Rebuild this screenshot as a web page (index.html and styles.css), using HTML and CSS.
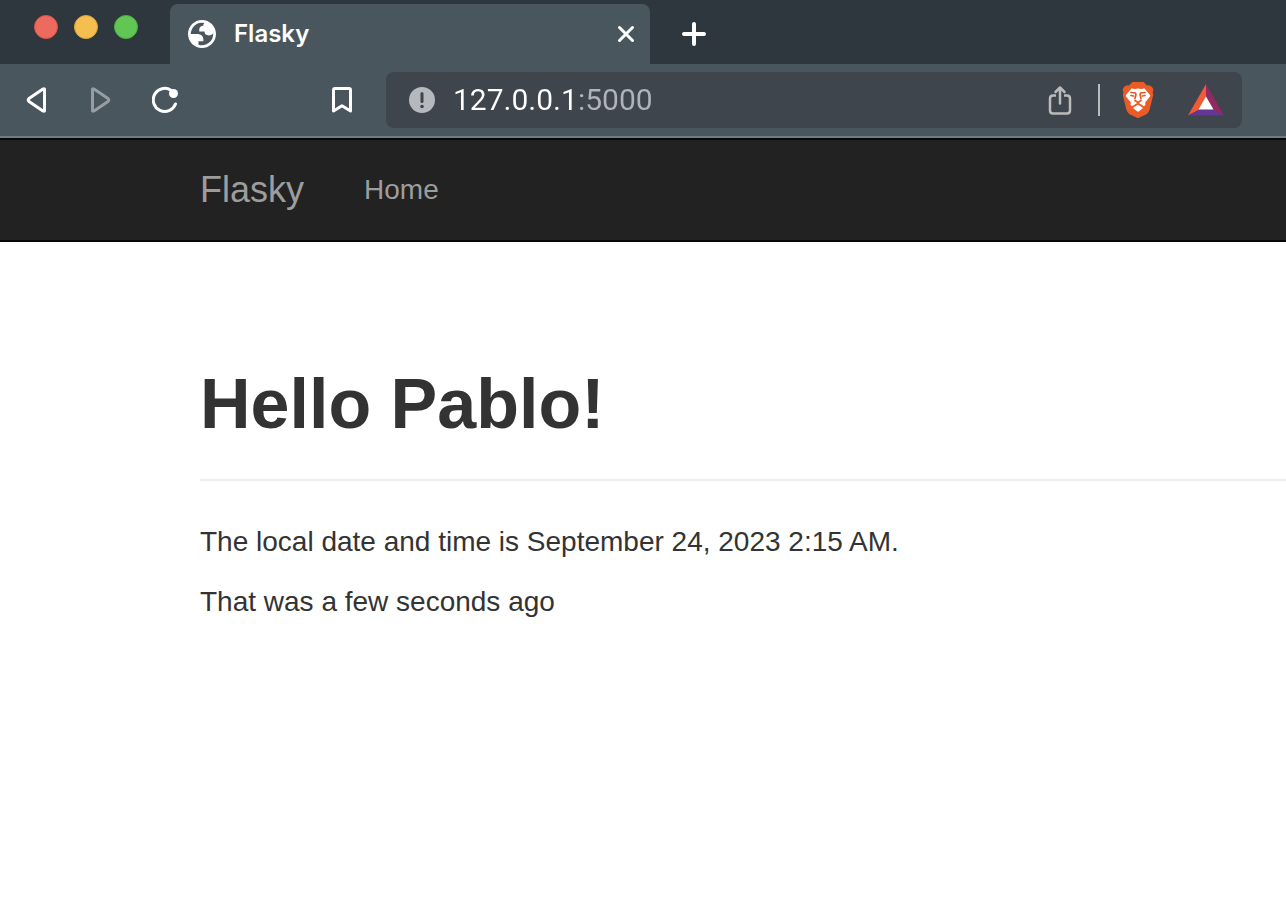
FILE: index.html
```html
<!DOCTYPE html>
<html lang="en">
<head>
<meta charset="utf-8">
<meta name="viewport" content="width=device-width, initial-scale=1">
<title>Flasky</title>
<link rel="stylesheet" href="styles.css">
</head>
<body>
<header class="browser">
  <div class="tab-strip">
    <div class="window-controls">
      <button class="light light-close" aria-label="Close window"></button>
      <button class="light light-minimize" aria-label="Minimize window"></button>
      <button class="light light-zoom" aria-label="Zoom window"></button>
    </div>
    <div class="tab">
      <svg width="28" height="28" viewBox="2 2 20 20" fill="#fff" aria-hidden="true">
        <path fill-rule="evenodd" d="M12 2C6.480 2 2 6.480 2 12s4.480 10 10 10 10-4.480 10-10S17.520 2 12 2ZM4 12h4.400c3.407.022 4.922 1.730 4.543 5.127H9.488v2.470a8.004 8.004 0 0 0 10.498-8.080C19.327 12.507 18.330 13 17 13c-2.137 0-3.206-.916-3.206-2.750h-3.748c-.274-2.728.683-4.092 2.870-4.092 0-.975.327-1.597.811-1.970A8 8 0 0 0 4 12Z"/>
      </svg>
      <span class="tab-title">Flasky</span>
      <button class="icon-button" aria-label="Close tab">
        <svg width="18" height="18" viewBox="0 0 18 18" fill="none" stroke="#fff" stroke-width="3" stroke-linecap="round"><path d="M2.500 2.500l13 13M15.500 2.500l-13 13"/></svg>
      </button>
    </div>
    <button class="icon-button new-tab" aria-label="New tab">
      <svg width="24" height="24" viewBox="0 0 24 24" fill="none" stroke="#fff" stroke-width="4" stroke-linecap="round"><path d="M12 2v20M2 12h20"/></svg>
    </button>
  </div>
  <div class="toolbar">
    <div class="history">
      <button class="icon-button" aria-label="Back">
        <svg width="28" height="28" viewBox="0 0 28 28" fill="none" stroke="#fff" stroke-width="3" stroke-linejoin="round"><path d="M20.500 3v22q-.5.500-1.500 0L5 15.500q-1.500-1.500 0-3L19 3q1-.5 1.500 0Z"/></svg>
      </button>
      <button class="icon-button" aria-label="Forward" disabled>
        <svg width="28" height="28" viewBox="0 0 28 28" fill="none" stroke="#969da3" stroke-width="3" stroke-linejoin="round"><path d="M4.500 3v22q.5.500 1.500 0l14-9.500q1.500-1.500 0-3L6 3q-1-.5-1.500 0Z"/></svg>
      </button>
      <button class="icon-button" aria-label="Reload">
        <svg width="28" height="28" viewBox="0 0 28 28" fill="none" stroke="#fff" stroke-width="3" stroke-linecap="round"><path d="M19 4.200A11.500 11.500 0 1 0 23.500 18"/><circle cx="21.500" cy="7.500" r="4.500" fill="#fff" stroke="none"/></svg>
      </button>
    </div>
    <button class="icon-button" aria-label="Bookmark this page">
      <svg width="28" height="28" viewBox="0 0 28 28" fill="none" stroke="#fff" stroke-width="3" stroke-linejoin="round"><path d="M7 2.500h14q1.500 0 1.500 1.500v21L14 19.800 5.500 25V4q0-1.500 1.500-1.500Z"/></svg>
    </button>
    <div class="address-bar">
      <button class="icon-button" aria-label="Site information">
        <svg width="26" height="26" viewBox="0 0 26 26"><circle cx="13" cy="13" r="13" fill="#b5b8bd"/><path d="M13 6.500v8" stroke="#3e454c" stroke-width="3" stroke-linecap="round"/><circle cx="13" cy="19.500" r="1.800" fill="#3e454c"/></svg>
      </button>
      <input class="address" type="text" aria-label="Address" value="127.0.0.1:5000" spellcheck="false">
      <button class="icon-button" aria-label="Share">
        <svg width="24" height="30" viewBox="0 0 24 30" fill="none" stroke="#bbb" stroke-width="2.500"><path d="M8 10.500H5q-3 0-3 3v12q0 3 3 3h14q3 0 3-3v-12q0-3-3-3h-3"/><path stroke-linecap="round" stroke-linejoin="round" d="M12 18.500V3M7.500 7 12 2.500 16.500 7"/></svg>
      </button>
      <span class="divider"></span>
      <button class="icon-button shield" aria-label="Brave Shields">
        <svg width="32" height="36" viewBox="0 0 32 36">
          <path fill="#ea5b28" d="M10.500 0h11L25 3.500q3-.6 5 1.500l1.500 2.500-.8 2.500.5 3-3.700 15q-.8 2.700-3 4.300L17.500 35.500q-1.500 1-3 0L7.500 32.300Q5.300 30.700 4.500 28L.8 13l.5-3L.5 7.500 2 5Q4 2.900 7 3.500Z"/>
          <path fill="#fff" d="M9.500 6.500 13 7l3-.6 3 .6 3.500-.5 5.500 6.500q.5.900-.2 1.800l-4.300 5.200q-.6.800-.2 1.500.6 1.500-.6 2.300l-2.200 1L16 21.500l-4.500 3.300-2.200-1q-1.200-.8-.6-2.300.4-.7-.2-1.500L4.200 14.800q-.7-.9-.2-1.800Z"/>
          <path fill="none" stroke="#ea5b28" stroke-width="1.700" stroke-linecap="round" stroke-linejoin="round" d="m9 10.500 4 .3 1 1.200-1 4.500M23 10.500l-4 .3-1 1.200 1 4.500M9 13.500l2.500.5M23 13.500l-2.500.5M13 18.500l3 2 3-2M16 20.500V23M10.500 25l5.500-3.500 5.500 3.500"/>
          <path fill="#fff" d="m16 22.800 4.500 2.700q.7.500 0 1.100L17 29.300q-1 .8-2 0l-3.500-2.700q-.7-.6 0-1.100Z"/>
        </svg>
      </button>
      <button class="icon-button" aria-label="Brave Rewards">
        <svg width="36" height="32" viewBox="0 0 36 32">
          <path fill="#f05a35" d="M18 0v13.500L11 26 0 31.500Z"/>
          <path fill="#902a60" d="M18 0v13.500L25 26l11 5.500Z"/>
          <path fill="#623791" d="M0 31.500 11 25.500h14l11 6Z"/>
          <path fill="#fff" d="m18 12.500-7.500 13h15Z"/>
        </svg>
      </button>
    </div>
  </div>
</header>
<nav class="navbar">
  <a class="brand" href="#">Flasky</a>
  <a class="nav-link" href="#">Home</a>
</nav>
<main class="content">
  <div class="page-header">
    <h1>Hello Pablo!</h1>
  </div>
  <p>The local date and time is September 24, 2023 2:15 AM.</p>
  <p>That was a few seconds ago</p>
</main>
</body>
</html>
```

FILE: styles.css
```css
* {
  box-sizing: border-box;
}

body {
  margin: 0;
  background: #fff;
  color: #333;
  font-family: "Liberation Sans", Arial, sans-serif;
  font-size: 28px;
  line-height: 40px;
}

button {
  padding: 0;
  border: 0;
  background: none;
}

.browser {
  background: #49565e;
  border-bottom: 2px solid #717c83;
  font-family: Inter, sans-serif;
}

.tab-strip {
  display: flex;
  align-items: flex-end;
  height: 64px;
  background: #2f373e;
}

.window-controls {
  display: flex;
  gap: 16px;
  width: 170px;
  height: 64px;
  padding: 15px 0 0 34px;
}

.light {
  width: 24px;
  height: 24px;
  border-radius: 50%;
}

.light-close {
  background: #ed6a5f;
  border: 1px solid #d9534a;
}

.light-minimize {
  background: #f5bf4f;
  border: 1px solid #dba53b;
}

.light-zoom {
  background: #62c655;
  border: 1px solid #4fae40;
}

.tab {
  display: flex;
  align-items: center;
  gap: 18px;
  width: 480px;
  height: 60px;
  padding: 0 15px 0 18px;
  border-radius: 8px 8px 0 0;
  background: #49565e;
}

.tab-title {
  flex: 1;
  color: #fff;
  font-size: 24px;
  font-weight: 600;
  line-height: 32px;
}

.icon-button {
  display: flex;
  flex: none;
  align-items: center;
  justify-content: center;
}

.new-tab {
  height: 60px;
  margin-left: 32px;
}

.toolbar {
  display: flex;
  align-items: center;
  gap: 30px;
  height: 72px;
  padding: 0 44px 0 24px;
}

.history {
  display: flex;
  gap: 36px;
  width: 274px;
}

.address-bar {
  display: flex;
  flex: 1;
  align-items: center;
  height: 56px;
  padding: 0 18px 0 23px;
  border-radius: 8px;
  background: #3e454c;
}

.address {
  flex: 1;
  min-width: 0;
  margin-left: 18px;
  padding: 0;
  border: 0;
  outline: 0;
  background: linear-gradient(90deg, #fff 125px, #b0b3b7 125px);
  background-clip: text;
  color: #fff;
  -webkit-text-fill-color: transparent;
  font-family: Roboto, sans-serif;
  font-size: 30px;
  line-height: 40px;
}

.divider {
  width: 2px;
  height: 32px;
  margin-left: 26px;
  background: #bbb;
}

.shield {
  margin: 0 34px 0 22px;
}

.navbar {
  display: flex;
  align-items: center;
  gap: 60px;
  height: 104px;
  padding: 0 200px;
  border: solid #080808;
  border-width: 2px 0;
  background: #222;
}

.brand,
.nav-link {
  color: #9d9d9d;
  text-decoration: none;
}

.brand {
  font-size: 36px;
}

.content {
  padding-left: 200px;
}

.page-header {
  margin: 122px 0 41px;
  padding-bottom: 35px;
  border-bottom: 2px solid #eee;
}

h1 {
  margin: 0;
  font-size: 70px;
  font-weight: 700;
  line-height: 80px;
}

p {
  margin: 0 0 20px;
}
```
